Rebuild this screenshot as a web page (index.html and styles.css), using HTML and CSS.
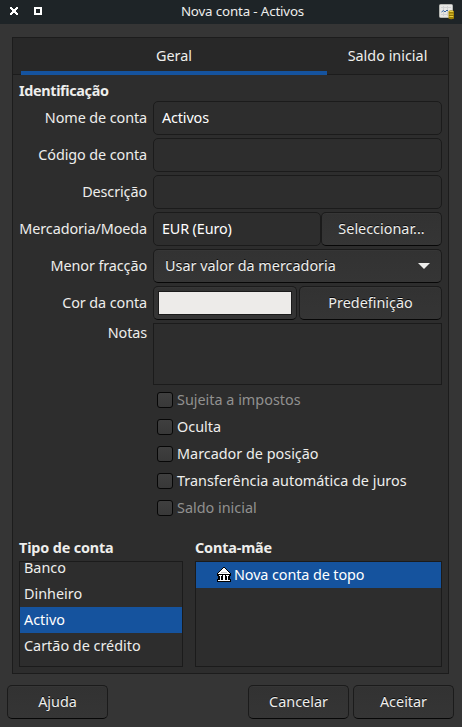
FILE: index.html
```html
<!DOCTYPE html>
<html lang="pt">
<head>
<meta charset="utf-8">
<title>Nova conta - Activos</title>
<link rel="stylesheet" href="styles.css">
</head>
<body>
<div class="window">
  <header class="titlebar">
    <div class="controls">
      <svg width="8" height="8" viewBox="0 0 8 8" shape-rendering="crispEdges" fill="#fff"><path d="M0 0h2v1h1v1h2v-1h1v-1h2v2h-1v1h-1v2h1v1h1v2h-2v-1h-1v-1h-2v1h-1v1h-2v-2h1v-1h1v-2h-1v-1h-1z"/></svg>
      <svg width="8" height="8" viewBox="0 0 8 8" shape-rendering="crispEdges"><path d="M1 1h6v6h-6z" fill="none" stroke="#fff" stroke-width="2"/></svg>
    </div>
    <h1>Nova conta - Activos</h1>
    <svg class="app" width="16" height="16" viewBox="0 0 16 16">
      <rect x=".5" y=".5" width="13" height="13" rx="1" fill="#e6e6e3" stroke="#b5b7b3"/>
      <path d="M2 3.500h10M2 10.500h7M4.500 2v10M8.500 2v10" stroke="#cfd0d0" fill="none"/>
      <path d="M2.500 8l2-1.500 1.500 1.500 2-2 1 1" stroke="#3465a4" fill="none"/>
      <path d="M9.500 7q2.500-1.500 5.500 0v7.500q-3 1.500-5.500 0z" fill="#b08f06"/>
      <path d="M10.500 7.500h3.500M10.500 10h3.500M10.500 12.500h3.500" stroke="#e8cf45"/>
      <path d="M10 9h5M10 11.500h5M10 14h5" stroke="#7c6504" stroke-width=".7"/>
    </svg>
  </header>
  <main class="notebook">
    <nav class="tabs"><div class="tab active">Geral</div><div class="tab">Saldo inicial</div></nav>
    <section class="page">
      <h2 class="tight">Identificação</h2>
      <div class="form">
        <label>Nome de conta</label><div class="entry">Activos</div>
        <label>Código de conta</label><div class="entry"></div>
        <label>Descrição</label><div class="entry"></div>
        <label>Mercadoria/Moeda</label>
        <div class="group"><div class="entry grow">EUR (Euro)</div><div class="button select">Seleccionar...</div></div>
        <label>Menor fracção</label>
        <div class="button combo"><span>Usar valor da mercadoria</span><svg width="12" height="6" viewBox="0 0 12 6"><path d="M0 0h12l-6 6z" fill="#eeeeec"/></svg></div>
        <label>Cor da conta</label>
        <div class="group spaced"><div class="button color"><div class="swatch"></div></div><div class="button grow">Predefinição</div></div>
        <label class="top">Notas</label><div class="notes"></div>
      </div>
      <div class="checks">
        <div class="check disabled"><i></i>Sujeita a impostos</div>
        <div class="check"><i></i>Oculta</div>
        <div class="check"><i></i>Marcador de posição</div>
        <div class="check"><i></i>Transferência automática de juros</div>
        <div class="check disabled"><i></i>Saldo inicial</div>
      </div>
      <div class="lists">
        <div>
          <h2>Tipo de conta</h2>
          <div class="list types"><div class="row first">Banco</div><div class="row">Dinheiro</div><div class="row selected">Activo</div><div class="row">Cartão de crédito</div></div>
        </div>
        <div>
          <h2>Conta-mãe</h2>
          <div class="list"><div class="row selected parent">
            <svg width="14" height="15" viewBox="0 0 14 15" shape-rendering="crispEdges"><path fill="#000" d="M6 0h2v1h1v1h1v1h1v1h1v1h1v1h1v3h-1v3h1v3H0v-3h1V9H0V6h1V5h1V4h1V3h1V2h1V1h1z"/><path fill="#fff" d="M6 1h2v1h1v1h1v1h1v1h1v1h1v1H1V6h1V5h1V4h1V3h1V2h1zM2 8h3v1H4v4h1v1H2v-1h1V9H2zM6 8h2v6H6zM9 8h3v1h-1v4h1v1H9v-1h1V9H9zM1 13h12v1H1z"/><path fill="#c8c8c8" d="M4 5h6v1H4z"/></svg>
            <span>Nova conta de topo</span></div></div>
        </div>
      </div>
    </section>
  </main>
  <footer class="actions"><div class="button help">Ajuda</div><div class="button">Cancelar</div><div class="button">Aceitar</div></footer>
</div>
</body>
</html>
```
FILE: styles.css
```css
* { box-sizing: border-box; }
body { margin: 0; background: #353535; color: #eeeeec; font: 14.4px/20px "Noto Sans", sans-serif; white-space: nowrap; }
h1, h2 { margin: 0; }
.window { width: 462px; height: 727px; display: flex; flex-direction: column; overflow: hidden; }
.titlebar { height: 24px; background: #1e2427; display: grid; grid-template-columns: 60px 1fr 40px; align-items: center; padding: 0 7px 2px 10px; }
.controls { display: flex; gap: 16px; }
.titlebar svg { display: block; }
.titlebar h1 { font-size: 13.33px; letter-spacing: -.15px; font-weight: 400; text-align: center; line-height: 20px; }
.titlebar .app { justify-self: end; margin-top: 1px; }
.notebook { margin: 13px 13px 0 12px; height: 637px; border: 1px solid #1c1c1c; background: #2d2d2d; }
.tabs { display: flex; height: 37px; background: #282828; border-bottom: 1px solid #1c1c1c; padding-left: 8px; }
.tab { flex: 1; text-align: center; line-height: 36px; }
.tab.active { flex: 0 0 306px; border-bottom: 4px solid #15539e; height: 37px; }
.page { padding: 6px; }
h2 { font-size: 14.4px; letter-spacing: -.15px; line-height: 20px; height: 20px; font-weight: 700; }
.tight { letter-spacing: -.35px; }
.form { display: grid; grid-template-columns: 128px 289px; column-gap: 6px; row-gap: 3px; }
label { text-align: right; line-height: 34px; letter-spacing: -.1px; }
label.top { line-height: 20px; }
.entry { height: 34px; border: 1px solid #1b1b1b; border-radius: 5px; padding: 0 8px; line-height: 32px; color: #fff; background: #2d2d2d; letter-spacing: -.15px; }
.group { display: flex; }
.spaced { gap: 2px; }
.grow { flex: 1; }
.button { height: 34px; border: 1px solid #1b1b1b; border-bottom-color: #070707; border-radius: 5px; background: linear-gradient(#323232, #353535); box-shadow: inset 0 1px rgba(255,255,255,.02); text-align: center; line-height: 32px; text-shadow: 0 -1px rgba(0,0,0,.8); }
.select { width: 121px; }
.combo { display: flex; justify-content: space-between; align-items: center; padding: 0 11px; }
.color { width: 144px; padding: 4px; }
.swatch { height: 24px; border: 1px solid #1b1b1b; background: #edebe9; }
.notes { height: 62px; border: 1px solid #1b1b1b; }
.checks { padding: 1px 0 0 138px; }
.check { height: 27px; line-height: 28px; display: flex; gap: 4px; }
.check i { width: 16px; height: 16px; margin-top: 6px; border: 1px solid #070707; border-radius: 3px; background: linear-gradient(#3f3f3f, #383838); }
.disabled { color: #919190; }
.lists { display: grid; grid-template-columns: 164px 247px; column-gap: 12px; margin-top: 17px; }
.lists h2 { height: 23px; }
.list { height: 106px; border: 1px solid #1b1b1b; overflow: hidden; }
.row { height: 26px; line-height: 26px; padding-left: 4px; }
.row.first { margin-top: -7px; }
.selected { background: #15539e; color: #fff; }
.parent { display: flex; gap: 3px; padding-left: 21px; letter-spacing: -.1px; }
.parent svg { margin-top: 5px; }
.actions { display: flex; gap: 4px; padding: 11px 8px 8px 7px; }
.actions .button { width: 101px; }
.actions .help { margin-right: auto; }
```
